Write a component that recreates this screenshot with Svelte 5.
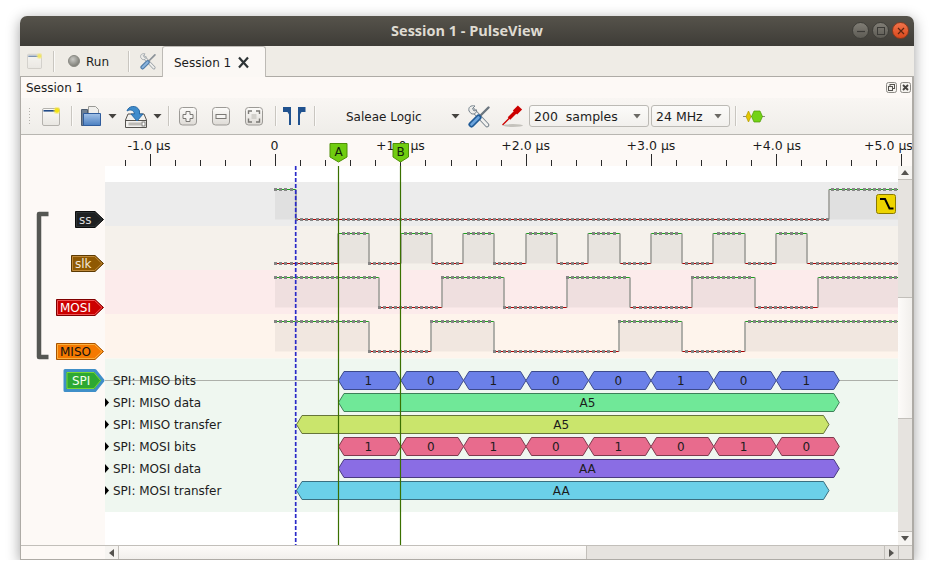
<script>
	const ticks = [];
	for (let k = -6; k <= 25; k++) ticks.push({ x: Math.round(275.3 + 25.03 * k) + 0.5, major: k % 5 === 0 });

	const rulerLabels = [
		["-1.0 µs", 149],
		["0", 274.5],
		["+1.0 µs", 400.5],
		["+2.0 µs", 525.7],
		["+3.0 µs", 651],
		["+4.0 µs", 776.7],
		["+5.0 µs", 888.5],
	];

	const start = 275;
	const end = 898;
	const signals = [
		{ bg: "#ececec", top: 182, h: 44, hi: 189.5, first: 1, edges: [296, 829] },
		{ bg: "#f5f1eb", top: 226, h: 44, hi: 233.5, first: 0, edges: [338, 369, 401, 432, 463, 494, 526, 557, 588, 620, 651, 682, 713, 745, 776, 807] },
		{ bg: "#fcebeb", top: 270, h: 44, hi: 277.5, first: 1, edges: [379, 442, 504, 567, 630, 692, 755, 818] },
		{ bg: "#fef4ec", top: 314, h: 44.5, hi: 321.5, first: 1, edges: [369, 431, 494, 619, 682, 745] },
	];

	// split a signal into runs of one level
	function segments(sig) {
		const out = [];
		let from = start;
		let level = sig.first;
		for (const x of sig.edges) {
			out.push({ from, to: x, level });
			from = x;
			level = 1 - level;
		}
		out.push({ from, to: end, level });
		return out;
	}

	function dots(sig) {
		const out = [];
		const segs = segments(sig);
		for (let x = start; x < end - 2; x += 5.208) {
			const s = segs.find((g) => x >= g.from - 0.5 && x < g.to - 1.5);
			if (s) out.push({ x: Math.round(x), level: s.level });
		}
		return out;
	}

	function hex(x0, x1, yc) {
		const s = 5.5;
		return `${x0},${yc} ${x0 + s},${yc - 9} ${x1 - s},${yc - 9} ${x1},${yc} ${x1 - s},${yc + 9} ${x0 + s},${yc + 9}`;
	}

	const bitEdges = [338.5, 401, 463.5, 526, 588.5, 651, 713.7, 776.3, 839.3];
	const rows = [
		{ name: "SPI: MISO bits", y: 380.5, fill: "#6b80e8", line: "#3d4a8c", bits: ["1", "0", "1", "0", "0", "1", "0", "1"] },
		{ name: "SPI: MISO data", y: 402.5, fill: "#70e898", line: "#3d8058", from: 338.5, to: 839.3, text: "A5" },
		{ name: "SPI: MISO transfer", y: 424.5, fill: "#cae56c", line: "#66753a", from: 296.5, to: 829, text: "A5" },
		{ name: "SPI: MOSI bits", y: 446.5, fill: "#e86b8d", line: "#7d3a4e", bits: ["1", "0", "1", "0", "1", "0", "1", "0"] },
		{ name: "SPI: MOSI data", y: 468.5, fill: "#8a6de4", line: "#4a3a80", from: 338.5, to: 839.3, text: "AA" },
		{ name: "SPI: MOSI transfer", y: 490.5, fill: "#6bd0e8", line: "#3a6f80", from: 296.5, to: 829, text: "AA" },
	];

	const channels = [
		{ name: "ss", x: 75.5, y: 219.5, fill: "#1e2021", line: "#0c0c0c", inner: "#2e3436", ink: "#dcdcdc", tx: 79 },
		{ name: "slk", x: 71.5, y: 263.5, fill: "#8f5902", line: "#5c3a02", inner: "#c08a3a", ink: "#f4e8d8", tx: 75 },
		{ name: "MOSI", x: 56.5, y: 307.5, fill: "#cc0000", line: "#800000", inner: "#ee5555", ink: "#ffffff", tx: 60 },
		{ name: "MISO", x: 56.5, y: 351.5, fill: "#f57900", line: "#a85400", inner: "#fcaf3e", ink: "#111111", tx: 60 },
	];
</script>

{#snippet tools()}
	<path d="M4 4 L19 20" stroke="#76828c" stroke-width="4.5" stroke-linecap="round" fill="none" />
	<path d="M4 4 L19 20" stroke="#f1f1ef" stroke-width="2.6" stroke-linecap="round" fill="none" />
	<path d="M1 6 C0 2 3 0 7 1 L4.5 3.5 L6 6 L8.5 4.8 C9 8 6 10 3 8.5 Z" fill="#eeeeec" stroke="#76828c" />
	<path d="M11.5 11.5 L20.5 2.5" stroke="#6c7680" stroke-width="2.4" stroke-linecap="round" />
	<path d="M3.5 19.5 L10.5 12.5" stroke="#1f5a96" stroke-width="6" stroke-linecap="round" />
	<path d="M3.5 19.5 L10.5 12.5" stroke="#6ba3dc" stroke-width="2.6" stroke-linecap="round" />
{/snippet}

{#snippet newdoc()}
	<rect x="0.5" y="1.5" width="17" height="17" rx="1.5" fill="url(#docfill)" stroke="#b4b2ad" />
	<rect x="1.5" y="3" width="13" height="1.6" fill="#204a87" />
	<circle cx="15" cy="3.5" r="3.6" fill="#fce94f" opacity="0.55" />
	<circle cx="15" cy="3.5" r="2.2" fill="#f3e312" />
{/snippet}

<div class="window">
	<svg class="defs" width="0" height="0" aria-hidden="true">
		<defs>
			<linearGradient id="docfill" x1="0" y1="0" x2="0" y2="1">
				<stop offset="0" stop-color="#fbfaf8" />
				<stop offset="1" stop-color="#e8e6e1" />
			</linearGradient>
			<linearGradient id="btnfill" x1="0" y1="0" x2="0" y2="1">
				<stop offset="0" stop-color="#fdfcfa" />
				<stop offset="1" stop-color="#dedbd6" />
			</linearGradient>
			<linearGradient id="folder" x1="0" y1="0" x2="0" y2="1">
				<stop offset="0" stop-color="#a3c2e8" />
				<stop offset="1" stop-color="#4a7fc0" />
			</linearGradient>
			<radialGradient id="led" cx="0.4" cy="0.35" r="0.7">
				<stop offset="0" stop-color="#c8c8c4" />
				<stop offset="1" stop-color="#77776f" />
			</radialGradient>
		</defs>
	</svg>

	<header class="titlebar">
		<span class="title">Session 1 - PulseView</span>
		<div class="winbtns">
			<span class="winbtn"><svg width="10" height="10"><path d="M1 5.5h8" stroke="#3c3b37" stroke-width="1.2" /></svg></span>
			<span class="winbtn"><svg width="10" height="10"><rect x="1.5" y="1.5" width="7" height="7" fill="none" stroke="#3c3b37" /></svg></span>
			<span class="winbtn close"><svg width="10" height="10"><path d="M2 2l6 6M8 2l-6 6" stroke="#5c2410" stroke-width="1.2" /></svg></span>
		</div>
	</header>

	<div class="tabbar">
		<svg class="tab-new" width="15" height="16" viewBox="0 0 18 19" opacity="0.6">{@render newdoc()}</svg>
		<span class="vsep tab-sep1"></span>
		<svg class="run-led" width="12" height="12"><circle cx="6" cy="6" r="5.5" fill="url(#led)" stroke="#8a8a84" /></svg>
		<span class="run-text">Run</span>
		<span class="vsep tab-sep2"></span>
		<svg class="tab-tools" width="16" height="17" viewBox="0 0 22 23" opacity="0.75">{@render tools()}</svg>
		<div class="tab">
			<span class="nudge">Session 1</span>
			<svg width="13" height="13" viewBox="0 0 13 13"><path d="M2 1.5 L11 11.5 M11 1.5 L2 11.5" stroke="#2e3436" stroke-width="2.2" /></svg>
		</div>
	</div>

	<div class="dock">
		<div class="docktitle">
			<span>Session 1</span>
			<div class="dockbtns">
				<svg width="11" height="11"><rect x="0.5" y="0.5" width="10" height="10" rx="2" fill="#f4f2ee" stroke="#8d8b86" /><rect x="4" y="2.5" width="4.5" height="4" fill="none" stroke="#55534f" /><rect x="2.5" y="4.5" width="4" height="4" fill="#f4f2ee" stroke="#55534f" /></svg>
				<svg width="11" height="11"><rect x="0.5" y="0.5" width="10" height="10" rx="2" fill="#f4f2ee" stroke="#8d8b86" /><path d="M3 3l5 5M8 3l-5 5" stroke="#44423f" stroke-width="1.8" /></svg>
			</div>
		</div>

		<div class="toolbar">
			<span class="grip"></span>
			<svg class="t-new" width="18" height="19" viewBox="0 0 18 19">{@render newdoc()}</svg>
			<span class="vsep t-sep1"></span>
			<svg class="t-open" width="20" height="20" viewBox="0 0 20 20">
				<path d="M7.5 .5 h7 l3 3 v9 h-10z" fill="#f0efec" stroke="#9a9a96" />
				<path d="M.5 3.5 h6 v16 h-6z" fill="#6d7f94" stroke="#4c5c70" />
				<path d="M2.5 7.5 h17 v12 h-17z" fill="url(#folder)" stroke="#2f5c9c" />
			</svg>
			<span class="arrow t-a1"></span>
			<svg class="t-save" width="22" height="23" viewBox="0 0 22 23">
				<path d="M.5 15 L3 9 H19 L21.5 15 V22.5 H.5 Z" fill="#f2f1ee" stroke="#55534f" />
				<path d="M.5 15.5 H21.5" stroke="#55534f" />
				<rect x="3.5" y="17.5" width="13" height="3" fill="#bcbab5" />
				<rect x="17" y="17" width="3" height="4" fill="#fff" stroke="#55534f" stroke-width="0.7" />
				<path d="M2 6 C3 1 12 -1 14.5 6 V9 H18 L12 16 L6 9 H9.5 C9 5 5 4 2 6 Z" fill="#3f8ccc" stroke="#2a6aa5" />
			</svg>
			<span class="arrow t-a2"></span>
			<span class="vsep t-sep2"></span>
			<svg class="t-z1" width="18" height="19" viewBox="0 0 18 19">
				<rect x="0.5" y="0.5" width="17" height="17.5" rx="3" fill="url(#btnfill)" stroke="#9c9a96" />
				<path d="M7 4.5 h4 v3 h3 v4 h-3 v3 h-4 v-3 h-3 v-4 h3z" fill="#f6f5f3" stroke="#7b7975" />
			</svg>
			<svg class="t-z2" width="18" height="19" viewBox="0 0 18 19">
				<rect x="0.5" y="0.5" width="17" height="17.5" rx="3" fill="url(#btnfill)" stroke="#9c9a96" />
				<rect x="4" y="7.5" width="10" height="4" fill="#f6f5f3" stroke="#7b7975" />
			</svg>
			<svg class="t-z2" width="18" height="19" viewBox="0 0 18 19">
				<rect x="0.5" y="0.5" width="17" height="17.5" rx="3" fill="url(#btnfill)" stroke="#9c9a96" />
				<path d="M3.5 7 V4 H7 M11 4 H14.5 V7 M14.5 11.5 V15 H11 M7 15 H3.5 V11.5" fill="none" stroke="#7b7975" stroke-width="1.4" />
				<rect x="6.5" y="7" width="5" height="5" fill="#d2d0cb" />
			</svg>
			<span class="vsep t-sep3"></span>
			<svg class="t-cur" width="23" height="19" viewBox="0 0 23 19">
				<path d="M0 0 H8 V18 H6 V7.5 L4.5 5 H0 Z" fill="#20528f" />
				<path d="M22.5 0 H15 V18 H17 V7.5 L18.5 5 H22.5 Z" fill="#20528f" />
			</svg>
			<span class="vsep t-sep4"></span>
			<div class="device"><span class="nudge">Saleae Logic</span><span class="arrow"></span></div>
			<svg class="t-tools" width="22" height="23" viewBox="0 0 22 23">{@render tools()}</svg>
			<svg class="t-probe" width="22" height="22" viewBox="0 0 22 22">
				<ellipse cx="12" cy="20.5" rx="10" ry="1.4" fill="#c4c2bc" />
				<path d="M1.5 20 L9 12.5" stroke="#cc0000" stroke-width="1.3" />
				<path d="M8 13.5 L15 6.5" stroke="#cc0000" stroke-width="3.6" />
				<path d="M14 7.5 L19 2.5" stroke="#cc0000" stroke-width="6" />
			</svg>
			<div class="combo samples"><span>200  samples</span><span class="arrow small"></span></div>
			<div class="combo rate"><span>24 MHz</span><span class="arrow small"></span></div>
			<span class="vsep t-sep5"></span>
			<svg class="t-dec" width="22" height="13" viewBox="0 0 22 13">
				<path d="M0 6.5 H22" stroke="#8a8a84" />
				<polygon points="3,6.5 5.5,1 8,6.5 5.5,12" fill="#e5c800" stroke="#b39c00" stroke-width="0.7" />
				<polygon points="8.5,6.5 11,1 17,1 19.5,6.5 17,12 11,12" fill="#73d216" stroke="#4e9a06" stroke-width="0.7" />
			</svg>
		</div>

		<svg class="ruler" width="891" height="31" viewBox="21 135 891 31">
			{#each ticks as t}
				<line x1={t.x} x2={t.x} y1={t.major ? 154 : 160} y2="166" stroke="#2a2a2a" />
			{/each}
			{#each rulerLabels as [label, x]}
				<text {x} y="150" text-anchor="middle">{label}</text>
			{/each}
			<polygon points="330,143.5 347,143.5 347,157 338.5,162 330,157" fill="#70cd10" stroke="#4e8f06" />
			<text x="338.5" y="156" text-anchor="middle" class="flag">A</text>
			<polygon points="393,143.5 408.5,143.5 408.5,157 400.5,162 393,157" fill="#70cd10" stroke="#4e8f06" />
			<text x="400.5" y="156" text-anchor="middle" class="flag">B</text>
		</svg>

		<div class="viewrow">
			<svg class="labels" width="84" height="379" viewBox="21 166 84 379">
				<path d="M48.5 214 H39 V357 H48.5" fill="none" stroke="#555753" stroke-width="4.5" stroke-linejoin="round" />
				{#each channels as c}
					<polygon points="{c.x},{c.y - 8} 95,{c.y - 8} 103.5,{c.y} 95,{c.y + 8} {c.x},{c.y + 8}" fill={c.fill} stroke={c.line} />
					<polygon points="{c.x + 1},{c.y - 7} 94.6,{c.y - 7} 102,{c.y} 94.6,{c.y + 7} {c.x + 1},{c.y + 7}" fill="none" stroke={c.inner} />
					<text x={c.tx} y={c.y + 4.5} fill={c.ink}>{c.name}</text>
				{/each}
				<polygon points="65,370.5 95,370.5 103,380.5 95,390.5 65,390.5" fill="#2da833" stroke="#3f8fc8" stroke-width="3" stroke-linejoin="round" />
				<polygon points="67,372.5 94,372.5 100.5,380.5 94,388.5 67,388.5" fill="none" stroke="#8ae234" stroke-width="0.8" />
				<text x="72" y="385" fill="#f4fff0">SPI</text>
			</svg>

			<svg class="view" width="793" height="379" viewBox="105 166 793 379">
				{#each signals as sig}
					<rect x="105" y={sig.top} width="793" height={sig.h} fill={sig.bg} />
				{/each}
				<rect x="105" y="358.5" width="793" height="153.5" fill="#eff7f0" />

				{#each signals as sig}
					{#each segments(sig) as s, i}
						{#if s.level}
							<rect x={s.from} y={sig.hi + 1} width={s.to - s.from} height="29" fill="#000" fill-opacity="0.05" />
							<line x1={s.from} x2={s.to} y1={sig.hi} y2={sig.hi} stroke="#1aa01a" />
						{:else}
							<line x1={s.from} x2={s.to} y1={sig.hi + 30} y2={sig.hi + 30} stroke="#a80000" />
						{/if}
						{#if i > 0}
							<line x1={s.from} x2={s.from} y1={sig.hi} y2={sig.hi + 30} stroke="#a2a29e" stroke-width="2" stroke-opacity="0.85" />
						{/if}
					{/each}
					{#each dots(sig) as d}
						<rect x={d.x - 1} y={(d.level ? sig.hi : sig.hi + 30) - 1.5} width="3" height="3" fill="#858585" />
					{/each}
				{/each}

				<line x1="105" x2="898" y1="380.5" y2="380.5" stroke="#adb0aa" />
				{#each rows as row}
					{#if row.bits}
						{#each row.bits as bit, i}
							<polygon points={hex(bitEdges[i], bitEdges[i + 1], row.y)} fill={row.fill} stroke={row.line} />
							<text x={(bitEdges[i] + bitEdges[i + 1]) / 2 - 1.5} y={row.y + 4.5} text-anchor="middle">{bit}</text>
						{/each}
					{:else}
						<polygon points={hex(row.from, row.to, row.y)} fill={row.fill} stroke={row.line} />
						<text x={(row.from + row.to) / 2 - 1.5} y={row.y + 4.5} text-anchor="middle">{row.text}</text>
					{/if}
					<text x="113" y={row.y + 4.5}>{row.name}</text>
					{#if row.name !== "SPI: MISO bits"}
						<polygon points="105,{row.y - 4.5} 109,{row.y} 105,{row.y + 4.5}" fill="#000" />
					{/if}
				{/each}

				<line x1="338.5" x2="338.5" y1="166" y2="545" stroke="#3a7000" stroke-width="1.2" />
				<line x1="400.5" x2="400.5" y1="166" y2="545" stroke="#3a7000" stroke-width="1.2" />
				<line x1="295.7" x2="295.7" y1="166" y2="545" stroke="#2a2ac8" stroke-width="1.7" stroke-dasharray="4 2" />

				<rect x="876.5" y="194.5" width="19" height="19" rx="2" fill="#edd400" stroke="#8a7a00" />
				<path d="M880 199 H885 L889.5 208.5 H893.5" fill="none" stroke="#000" stroke-width="2" />
			</svg>

			<div class="vscroll">
				<span class="sbtn"><span class="up"></span></span>
				<span class="track vt1"></span>
				<span class="handle vh"></span>
				<span class="track vt2"></span>
				<span class="sbtn last"><span class="down"></span></span>
			</div>
		</div>

		<div class="hrow">
			<span class="labels-gap"></span>
			<div class="hscroll">
				<span class="sbtn h"><span class="left"></span></span>
				<span class="handle hh"></span>
				<span class="track ht"></span>
				<span class="sbtn h rightbtn"><span class="right"></span></span>
			</div>
			<span class="corner"></span>
		</div>
	</div>
</div>

<style>
	:global(body) {
		margin: 0;
		background: #ffffff;
	}

	.window {
		box-sizing: border-box;
		width: 894px;
		height: 544px;
		margin: 16px 0 0 20px;
		border-radius: 7px 7px 0 0;
		box-shadow: 0 3px 14px rgba(0, 0, 0, 0.38);
		font: 12px "DejaVu Sans", sans-serif;
		color: #1c1c1c;
		display: flex;
		flex-direction: column;
		position: relative;
	}

	.defs {
		position: absolute;
	}

	.titlebar {
		height: 30px;
		flex: none;
		box-sizing: border-box;
		padding-bottom: 1px;
		display: flex;
		align-items: center;
		justify-content: center;
		position: relative;
		border-radius: 7px 7px 0 0;
		background: linear-gradient(#56534b, #3e3c37);
	}

	.title {
		font: bold 14.5px "Open Sans", sans-serif;
		color: #dfdbd2;
	}

	.winbtns {
		position: absolute;
		right: 5px;
		top: 6px;
		display: flex;
		gap: 3px;
	}

	.winbtn {
		width: 15px;
		height: 15px;
		border: 1px solid #3f3e39;
		border-radius: 50%;
		background: linear-gradient(#807d75, #5d5b54);
		display: flex;
		align-items: center;
		justify-content: center;
	}

	.winbtn.close {
		background: linear-gradient(#f0734a, #d9481c);
		border-color: #8c3a1e;
	}

	.tabbar {
		height: 31px;
		flex: none;
		box-sizing: border-box;
		display: flex;
		align-items: center;
		background: #efece6;
		border-bottom: 1px solid #aeaba6;
		padding-left: 7px;
	}

	.nudge {
		padding-top: 2px;
	}

	.vsep {
		width: 1px;
		background: #c9c6c0;
		box-shadow: 1px 0 0 #fbfaf8;
		flex: none;
	}

	.tabbar .vsep {
		height: 21px;
	}

	.tab-sep1 {
		margin-left: 11px;
	}

	.run-led {
		margin-left: 14px;
	}

	.run-text {
		margin-left: 6px;
		padding-top: 2px;
		width: 23px;
	}

	.tab-sep2 {
		margin-left: 19px;
	}

	.tab-tools {
		margin-left: 11px;
	}

	.tab {
		box-sizing: border-box;
		height: 31px;
		width: 104px;
		margin-left: 6px;
		margin-bottom: -1px;
		padding: 0 15px 0 11px;
		display: flex;
		align-items: center;
		justify-content: space-between;
		background: #fbf8f5;
		border: 1px solid #bdbab5;
		border-bottom: none;
		border-radius: 3px 3px 0 0;
	}

	.dock {
		flex: 1;
		min-height: 0;
		display: flex;
		flex-direction: column;
		border-left: 1px solid #aeaba6;
		border-right: 2px solid #aeaba6;
		border-bottom: 1px solid #aeaba6;
		background: #fdf9f6;
	}

	.docktitle {
		height: 21px;
		flex: none;
		display: flex;
		align-items: center;
		justify-content: space-between;
		padding: 0 1px 0 5px;
	}

	.dockbtns {
		display: flex;
		gap: 3px;
	}

	.dockbtns svg {
		display: block;
	}

	.toolbar {
		height: 37px;
		flex: none;
		box-sizing: border-box;
		display: flex;
		align-items: center;
		background: linear-gradient(#f9f6f3, #efedE9);
		border-bottom: 1px solid #b8b6b1;
	}

	.toolbar svg {
		flex: none;
	}

	.toolbar .vsep {
		height: 20px;
	}

	.grip {
		width: 3px;
		height: 18px;
		margin-left: 7px;
		flex: none;
		background: radial-gradient(circle, #b5b2ac 0.7px, transparent 0.8px) 0 0 / 3px 3px;
	}

	.t-new { margin-left: 11px; }
	.t-sep1 { margin-left: 11px; }
	.t-open { margin-left: 9px; }
	.t-a1 { margin-left: 7px; }
	.t-save { margin-left: 8px; }
	.t-a2 { margin-left: 6px; }
	.t-sep2 { margin-left: 6px; }
	.t-z1 { margin-left: 10px; }
	.t-z2 { margin-left: 15px; }
	.t-sep3 { margin-left: 12px; }
	.t-cur { margin-left: 7px; }
	.t-sep4 { margin-left: 8px; }
	.t-tools { margin-left: 8px; }
	.t-probe { margin-left: 11px; }
	.t-sep5 { margin-left: 5px; }
	.t-dec { margin-left: 7px; }

	.arrow {
		width: 9px;
		height: 5px;
		flex: none;
		background: #45433f;
		clip-path: polygon(0 0, 100% 0, 50% 100%);
	}

	.arrow.small {
		width: 8px;
		background: #6b6964;
	}

	.device {
		width: 114px;
		margin-left: 31px;
		flex: none;
		display: flex;
		align-items: center;
		justify-content: space-between;
	}

	.combo {
		box-sizing: border-box;
		height: 22px;
		flex: none;
		display: flex;
		align-items: center;
		justify-content: space-between;
		padding: 0 7px 0 4px;
		border: 1px solid #bcbab5;
		border-radius: 3px;
		background: linear-gradient(#fcfbf9, #f2f0ed);
		font-size: 12.5px;
		white-space: pre;
	}

	.samples {
		width: 120px;
		margin-left: 6px;
	}

	.rate {
		width: 79px;
		margin-left: 2px;
	}

	.ruler {
		display: block;
		flex: none;
	}

	.ruler text {
		font: 12.5px "DejaVu Sans", sans-serif;
		fill: #1c1c1c;
	}

	.ruler text.flag {
		font-size: 12px;
		fill: #10240a;
	}

	.viewrow {
		height: 379px;
		flex: none;
		display: flex;
	}

	.labels,
	.view {
		display: block;
		flex: none;
	}

	.labels text {
		font: 12px "DejaVu Sans", sans-serif;
	}

	.view text {
		font: 12px "DejaVu Sans", sans-serif;
		fill: #1c1c1c;
	}

	.view {
		background: #ffffff;
	}

	.vscroll {
		width: 14px;
		flex: none;
		display: flex;
		flex-direction: column;
	}

	.sbtn {
		box-sizing: border-box;
		width: 14px;
		height: 14px;
		flex: none;
		display: flex;
		align-items: center;
		justify-content: center;
		background: #f6f4f1;
		border-bottom: 1px solid #c2bfba;
	}

	.sbtn.last {
		border-top: 1px solid #c2bfba;
		border-bottom: none;
	}

	.sbtn.h {
		border-bottom: none;
		border-right: 1px solid #c2bfba;
	}

	.sbtn.rightbtn {
		border-right: none;
		border-left: 1px solid #c2bfba;
		background: #e6e3df;
	}

	.up,
	.down,
	.left,
	.right {
		width: 0;
		height: 0;
		border: 4px solid transparent;
	}

	.up {
		border-top: none;
		border-bottom: 5px solid #55534f;
	}

	.down {
		border-bottom: none;
		border-top: 5px solid #55534f;
	}

	.left {
		border-left: none;
		border-right: 5px solid #55534f;
	}

	.right {
		border-right: none;
		border-left: 5px solid #55534f;
	}

	.track {
		background: #e6e3df;
	}

	.handle {
		box-sizing: border-box;
		flex: none;
	}

	.vt1 {
		height: 117px;
		flex: none;
	}

	.vh {
		height: 122px;
		background: linear-gradient(90deg, #fdfbf9, #f1efec);
		border-top: 1px solid #c2bfba;
		border-bottom: 1px solid #c2bfba;
	}

	.vt2 {
		flex: 1;
	}

	.hrow {
		height: 14px;
		flex: none;
		display: flex;
		box-shadow: inset 0 1px 0 #c2bfba;
	}

	.labels-gap {
		width: 84px;
		flex: none;
	}

	.hscroll {
		flex: 1;
		display: flex;
		border-top: 1px solid #c2bfba;
		box-sizing: border-box;
	}

	.hscroll .sbtn {
		height: 13px;
	}

	.hh {
		width: 468px;
		background: linear-gradient(#fdfbf9, #f1efec);
		border-right: 1px solid #c2bfba;
	}

	.ht {
		flex: 1;
	}

	.corner {
		box-sizing: border-box;
		width: 14px;
		flex: none;
		background: #e6e3df;
		border-top: 1px solid #c2bfba;
		border-left: 1px solid #c2bfba;
	}
</style>
